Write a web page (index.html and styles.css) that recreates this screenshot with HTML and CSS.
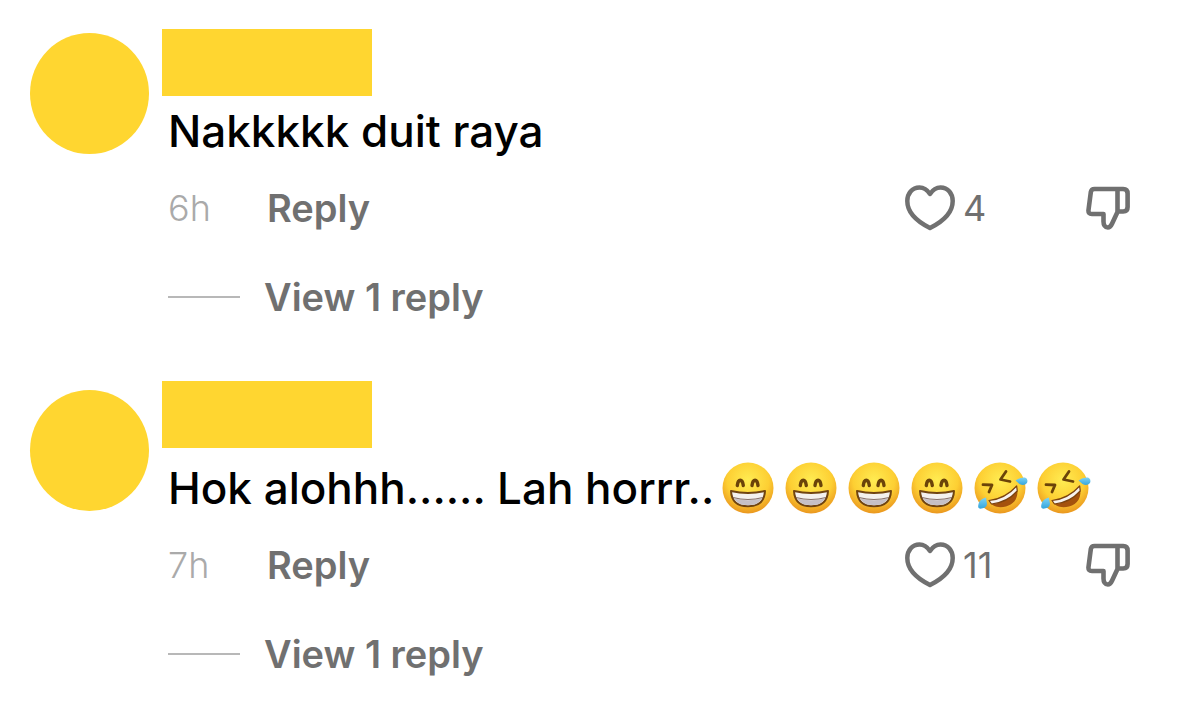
FILE: index.html
```
<!DOCTYPE html>
<html lang="ms">
<head>
    <meta charset="UTF-8">
    <meta name="viewport" content="width=device-width, initial-scale=1.0">
    <title>Comments</title>
    <link rel="stylesheet" href="styles.css">
</head>
<body>
    <!-- Shared icons -->
    <svg class="sprite" aria-hidden="true">
        <defs>
            <radialGradient id="face" cx="50%" cy="35%" r="68%">
                <stop offset="0" stop-color="#ffec52"/>
                <stop offset="0.6" stop-color="#fdcf33"/>
                <stop offset="1" stop-color="#e8901c"/>
            </radialGradient>
            <linearGradient id="tear" x1="0" y1="0" x2="0" y2="1">
                <stop offset="0" stop-color="#7ed4f5"/>
                <stop offset="1" stop-color="#35a5dc"/>
            </linearGradient>
            <symbol id="icon-heart" viewBox="0 0 50 46">
                <path d="M25 9C22 4.500 18.500 2.500 14.500 2.500C7 2.500 2.300 8.500 2.300 16C2.300 27 12 36.500 25 43C38 36.500 47.700 27 47.700 16C47.700 8.500 43 2.500 35.500 2.500C31.500 2.500 28 4.500 25 9Z" fill="none" stroke="currentColor" stroke-width="4.500" stroke-linejoin="round"/>
            </symbol>
            <symbol id="icon-dislike" viewBox="0 0 44 44">
                <path d="M31.500 3H8.500Q5.300 3 4.800 6.200L2.500 24Q2 28 6 28H17.500V35.500C17.500 39 19 41.500 21.800 41.500C24 41.500 25 40 26 37.800L31.500 26ZM31.500 3H37.200Q41.600 3 41.600 7.500V21Q41.600 25.500 37.200 25.500H31.500" fill="none" stroke="currentColor" stroke-width="4.600" stroke-linejoin="round"/>
            </symbol>
            <symbol id="emoji-grin" viewBox="0 0 52 52">
                <circle cx="26" cy="26" r="25.500" fill="url(#face)"/>
                <path d="M15.300 23.500C16 16.500 20.500 16.500 21.300 23.500M30 23.500C30.800 16.500 35.300 16.500 36 23.500" fill="none" stroke="#6b4309" stroke-width="3.400" stroke-linecap="round"/>
                <path d="M9 29Q26 33 43 29C42.500 39.500 36 44.300 26 44.300C16 44.300 9.500 39.500 9 29Z" fill="#f4f1ee" stroke="#704411" stroke-width="2" stroke-linejoin="round"/>
                <path d="M12 36.500Q26 40 40 36.500Q36.500 43.300 26 43.300Q15.500 43.300 12 36.500Z" fill="#c6c0c6"/>
                <path d="M11 35.500Q26 39.500 41 35.500" fill="none" stroke="#85706a" stroke-width="1.200"/>
            </symbol>
            <symbol id="emoji-rofl" viewBox="0 0 52 52">
                <circle cx="26" cy="26" r="25.500" fill="url(#face)"/>
                <path d="M32 9.500L26.500 17.500L36 19.500M9 22.700L18 23L15 30" fill="none" stroke="#6b4309" stroke-width="2.800" stroke-linecap="round" stroke-linejoin="round"/>
                <path d="M15 38.500Q31 37 42.700 24C45.500 35 40.500 42.500 32 44.500C24.500 46.300 17.500 44.500 15 38.500Z" fill="#a4520d"/>
                <path d="M15 38.500Q31 37 42.700 24L43.200 29Q33 40.500 17.500 42Z" fill="#f7f3f0" stroke="#7b430f" stroke-width="1.200" stroke-linejoin="round"/>
                <path d="M41.500 18.500Q46 15 51 15.500Q54.500 17 53 21Q50 24.500 45.500 22Z" fill="url(#tear)"/>
                <path d="M12 35.500Q5.500 37 4.500 42Q3 47.500 7.500 46.500Q12.500 46 13 42Z" fill="url(#tear)"/>
            </symbol>
        </defs>
    </svg>

    <main class="comments">
        <article class="comment">
            <div class="avatar"></div>
            <div class="content">
                <div class="author"><div class="name"></div></div>
                <p class="text">Nakkkkk duit raya</p>
                <div class="actions">
                    <span class="time">6h</span>
                    <button class="reply">Reply</button>
                    <button class="like" aria-label="Like, 4">
                        <svg class="heart"><use href="#icon-heart"/></svg>
                        <span>4</span>
                    </button>
                    <button class="dislike" aria-label="Dislike">
                        <svg class="thumb"><use href="#icon-dislike"/></svg>
                    </button>
                </div>
                <button class="view-replies">View 1 reply</button>
            </div>
        </article>

        <article class="comment">
            <div class="avatar"></div>
            <div class="content">
                <div class="author author-raised"><div class="name"></div></div>
                <p class="text">
                    <span>Hok alohhh...... Lah horrr..</span>
                    <span class="emojis">
                        <svg class="emoji" role="img" aria-label="Grinning face"><use href="#emoji-grin"/></svg>
                        <svg class="emoji" role="img" aria-label="Grinning face"><use href="#emoji-grin"/></svg>
                        <svg class="emoji" role="img" aria-label="Grinning face"><use href="#emoji-grin"/></svg>
                        <svg class="emoji" role="img" aria-label="Grinning face"><use href="#emoji-grin"/></svg>
                        <svg class="emoji" role="img" aria-label="Rolling on the floor laughing"><use href="#emoji-rofl"/></svg>
                        <svg class="emoji" role="img" aria-label="Rolling on the floor laughing"><use href="#emoji-rofl"/></svg>
                    </span>
                </p>
                <div class="actions">
                    <span class="time">7h</span>
                    <button class="reply">Reply</button>
                    <button class="like" aria-label="Like, 11">
                        <svg class="heart"><use href="#icon-heart"/></svg>
                        <span>11</span>
                    </button>
                    <button class="dislike" aria-label="Dislike">
                        <svg class="thumb"><use href="#icon-dislike"/></svg>
                    </button>
                </div>
                <button class="view-replies">View 1 reply</button>
            </div>
        </article>
    </main>
</body>
</html>
```
FILE: styles.css
```
* {
    box-sizing: border-box;
}
body {
    margin: 0;
    background-color: #fff;
    color: #000;
    font-family: 'Inter', 'Liberation Sans', sans-serif;
}
button {
    padding: 0;
    border: none;
    background: none;
    font: inherit;
    color: inherit;
    cursor: pointer;
}
.sprite {
    position: absolute;
    width: 0;
    height: 0;
}
symbol {
    overflow: visible;
}

.comments {
    display: flex;
    flex-direction: column;
    gap: 33px;
    padding: 20px 49px 0 30px;
}
.comment {
    display: flex;
    gap: 13px;
}
.avatar {
    flex: none;
    width: 119px;
    height: 121px;
    margin-top: 13px;
    border-radius: 50%;
    background-color: #ffd630;
}
.content {
    flex: 1;
    min-width: 0;
}

.author {
    display: flex;
    align-items: flex-end;
    height: 76px;
}
.author-raised {
    padding-bottom: 5px;
}
.name {
    width: 210px;
    height: 67px;
    background-color: #ffd630;
}

.text {
    display: flex;
    align-items: center;
    gap: 8px;
    margin: 0;
    padding-left: 6px;
    font-size: 44px;
    font-weight: 500;
    line-height: 70px;
}
.emojis {
    display: flex;
    gap: 11px;
}
.emoji {
    width: 52px;
    height: 52px;
    overflow: visible;
}

.actions {
    display: flex;
    align-items: center;
    height: 84px;
    padding-left: 6px;
    color: #707070;
    font-size: 36px;
}
.time {
    width: 99px;
    color: #aaa;
    font-weight: 300;
}
.reply {
    font-size: 38px;
    font-weight: 600;
}
.like {
    display: flex;
    align-items: center;
    gap: 8px;
    width: 181px;
    margin-left: auto;
}
.heart {
    width: 50px;
    height: 46px;
}
.thumb {
    display: block;
    width: 44px;
    height: 44px;
}

.view-replies {
    display: flex;
    align-items: center;
    gap: 24px;
    height: 94px;
    padding-left: 6px;
    color: #707070;
    font-size: 38px;
    font-weight: 600;
}
.view-replies::before {
    content: "";
    width: 72px;
    height: 2px;
    background-color: #b8b8b8;
}
```
